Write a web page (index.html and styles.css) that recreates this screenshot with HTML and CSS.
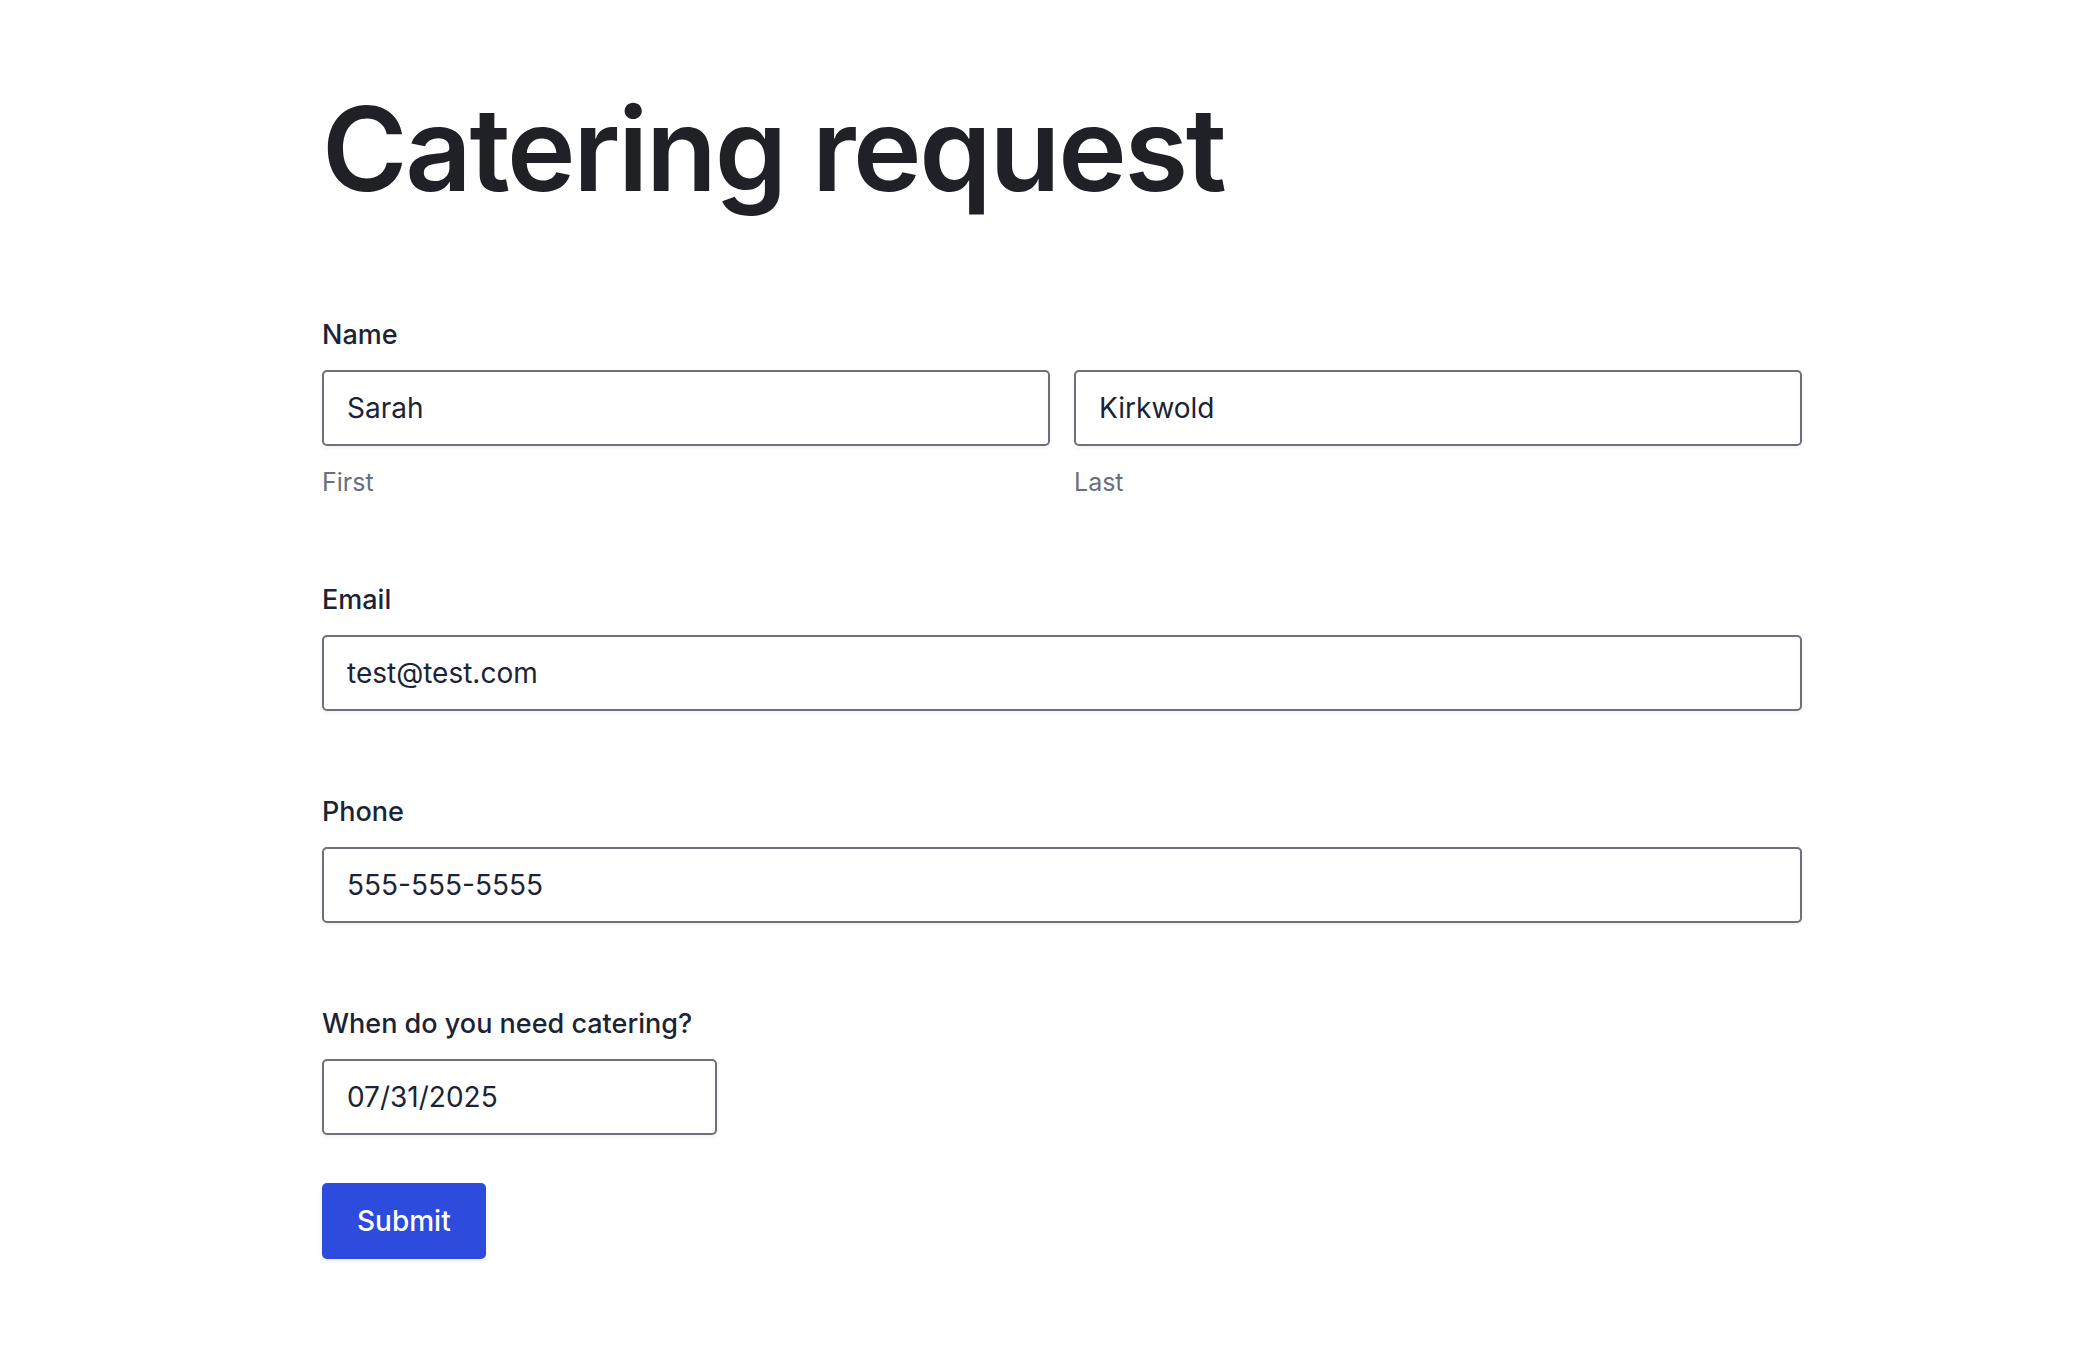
FILE: index.html
```html
<!DOCTYPE html>
<html lang="en">
<head>
    <meta charset="UTF-8">
    <meta name="viewport" content="width=device-width, initial-scale=1.0">
    <title>Catering request</title>
    <link rel="stylesheet" href="styles.css">
</head>
<body>
    <div class="container">
        <h1 class="title">Catering request</h1>
        <form class="form" id="cateringForm">
            <div class="field">
                <label class="label">Name</label>
                <div class="row">
                    <div class="col">
                        <input class="input" type="text" value="Sarah">
                        <span class="hint">First</span>
                    </div>
                    <div class="col">
                        <input class="input" type="text" value="Kirkwold">
                        <span class="hint">Last</span>
                    </div>
                </div>
            </div>

            <div class="field">
                <label class="label">Email</label>
                <input class="input" type="email" value="test@test.com">
            </div>

            <div class="field">
                <label class="label">Phone</label>
                <input class="input" type="tel" value="555-555-5555">
            </div>

            <div class="field">
                <label class="label">When do you need catering?</label>
                <input class="input date" type="text" value="07/31/2025">
                <button class="submit" type="submit">Submit</button>
            </div>
        </form>
    </div>
</body>
</html>
```

FILE: styles.css
```css
body {
    margin: 0;
    font-family: Inter, "Noto Sans", sans-serif;
    background: #ffffff;
    color: #1b2434;
}
.container {
    width: 1480px;
    padding: 77px 0 60px 322px;
}
.title {
    margin: 0 0 96px 0;
    font-size: 116px;
    line-height: 144px;
    font-weight: 600;
    letter-spacing: -0.02em;
    color: #202126;
}
.form {
    display: flex;
    flex-direction: column;
    gap: 83px;
}
.field {
    display: flex;
    flex-direction: column;
}
.label {
    font-size: 27px;
    line-height: 36px;
    font-weight: 500;
    margin-bottom: 17px;
}
.row {
    display: flex;
    gap: 24px;
}
.col {
    flex: 1;
    display: flex;
    flex-direction: column;
}
.input {
    box-sizing: border-box;
    height: 76px;
    width: 100%;
    padding: 0 23px;
    border: 2px solid #6e717c;
    border-radius: 5px;
    box-shadow: 0 2px 4px rgba(0, 0, 0, 0.06);
    font-family: inherit;
    font-size: 28px;
    color: #1b2434;
    background: #fff;
}
.input.date {
    width: 395px;
}
.hint {
    margin-top: 19px;
    font-size: 25px;
    line-height: 34px;
    color: #6b6f7a;
}
.submit {
    align-self: flex-start;
    margin-top: 48px;
    height: 76px;
    padding: 0 35px;
    border: none;
    border-radius: 5px;
    background: #2d4bdc;
    color: #ffffff;
    font-family: inherit;
    font-size: 28px;
    font-weight: 500;
    box-shadow: 0 2px 4px rgba(0, 0, 0, 0.08);
    cursor: pointer;
}
```
